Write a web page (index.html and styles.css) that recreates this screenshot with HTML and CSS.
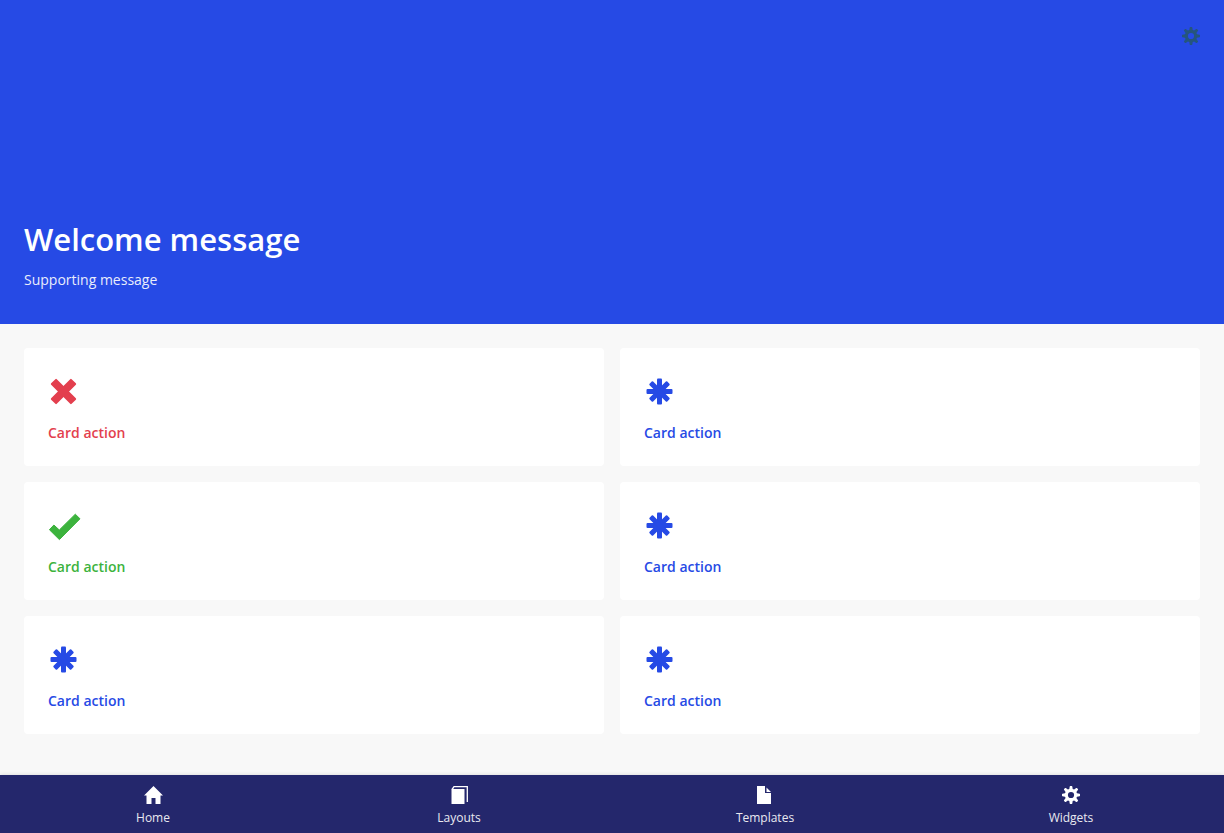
FILE: index.html
```html
<!DOCTYPE html>
<html lang="en">
<head>
<meta charset="utf-8">
<meta name="viewport" content="width=device-width, initial-scale=1">
<title>Home</title>
<link rel="stylesheet" href="styles.css">
</head>
<body>
<svg class="sprite" aria-hidden="true">
  <symbol id="asterisk" viewBox="0 0 32 32">
    <g fill="currentColor">
      <rect x="13" y="2.5" width="5" height="26" rx="1"/>
      <rect x="13" y="3" width="5" height="25" rx="1" transform="rotate(45 15.5 15.5)"/>
      <rect x="13" y="2.5" width="5" height="26" rx="1" transform="rotate(90 15.5 15.5)"/>
      <rect x="13" y="3" width="5" height="25" rx="1" transform="rotate(135 15.5 15.5)"/>
    </g>
  </symbol>
  <symbol id="cross" viewBox="0 0 32 32">
    <g fill="currentColor">
      <rect x="11.5" y="1" width="8" height="29" rx="1" transform="rotate(45 15.5 15.5)"/>
      <rect x="11.5" y="1" width="8" height="29" rx="1" transform="rotate(-45 15.5 15.5)"/>
    </g>
  </symbol>
  <symbol id="check" viewBox="0 0 33 32">
    <path d="M27.300 4.200 32 8.800 11.400 29.600 1.400 19.700 5.900 15 11.300 20z" fill="currentColor" stroke="currentColor" stroke-linejoin="round"/>
  </symbol>
  <symbol id="gear" viewBox="0 0 18 18">
    <path d="M7.300 3 7.700.4Q7.800 0 8.200 0H9.800Q10.200 0 10.300.4L10.700 3 12.100 3.600 14.200 2Q14.600 1.800 14.900 2.100L15.900 3.100Q16.200 3.400 16 3.800L14.400 5.900 15 7.300 17.600 7.700Q18 7.800 18 8.200V9.800Q18 10.200 17.600 10.300L15 10.700 14.400 12.100 16 14.200Q16.200 14.600 15.900 14.900L14.900 15.900Q14.600 16.200 14.200 16L12.100 14.400 10.700 15 10.300 17.600Q10.200 18 9.800 18H8.200Q7.800 18 7.700 17.600L7.300 15 5.900 14.400 3.800 16Q3.400 16.200 3.100 15.900L2.100 14.900Q1.800 14.600 2 14.200L3.600 12.100 3 10.700.4 10.300Q0 10.200 0 9.800V8.200Q0 7.800.4 7.700L3 7.300 3.600 5.900 2 3.800Q1.800 3.400 2.100 3.100L3.100 2.100Q3.400 1.800 3.800 2L5.900 3.600zM9 5.900A3.100 3.100 0 1 0 9 12.100 3.100 3.100 0 1 0 9 5.900z" fill="currentColor" fill-rule="evenodd"/>
  </symbol>
</svg>

<header class="hero">
  <button class="settings" type="button" aria-label="Settings"><svg class="icon-small"><use href="#gear"/></svg></button>
  <div class="welcome">
    <h1 class="title">Welcome message</h1>
    <p class="subtitle">Supporting message</p>
  </div>
</header>

<main class="cards">
  <button class="card danger" type="button"><svg class="icon"><use href="#cross"/></svg><span>Card action</span></button>
  <button class="card" type="button"><svg class="icon"><use href="#asterisk"/></svg><span>Card action</span></button>
  <button class="card success" type="button"><svg class="icon icon-check"><use href="#check"/></svg><span>Card action</span></button>
  <button class="card" type="button"><svg class="icon"><use href="#asterisk"/></svg><span>Card action</span></button>
  <button class="card" type="button"><svg class="icon"><use href="#asterisk"/></svg><span>Card action</span></button>
  <button class="card" type="button"><svg class="icon"><use href="#asterisk"/></svg><span>Card action</span></button>
</main>

<nav class="tabs" aria-label="Main">
  <a class="tab" href="#home"><svg class="tab-icon" viewBox="0 0 20 20"><path d="M10.500 1 20 10.500H17.500V19H12.500V13H8.500V19H3.500V10.500H1z" fill="currentColor"/></svg><span class="tab-label">Home</span></a>
  <a class="tab" href="#layouts"><svg class="tab-icon" viewBox="0 0 20 20"><path d="M2.500 4H15.500V19H2.500z" fill="currentColor"/><path d="M3 4.500 5 1.700H18.300V17" fill="none" stroke="currentColor" stroke-width="1.300"/></svg><span class="tab-label">Layouts</span></a>
  <a class="tab" href="#templates"><svg class="tab-icon" viewBox="0 0 20 20"><path d="M2 1H10V8H16V19H2zM11.500 2.500 16 7H11.500z" fill="currentColor"/></svg><span class="tab-label">Templates</span></a>
  <a class="tab" href="#widgets"><svg class="tab-icon" viewBox="-1 -1 20 20"><use href="#gear" width="18" height="18"/></svg><span class="tab-label">Widgets</span></a>
</nav>
</body>
</html>
```
FILE: styles.css
```css
* {
  box-sizing: border-box;
}

body {
  margin: 0;
  min-height: 100vh;
  display: flex;
  flex-direction: column;
  background: #f8f8f8;
  font-family: "Open Sans", sans-serif;
  font-size: 14px;
  line-height: 20px;
}

button {
  border: 0;
  font: inherit;
  text-align: left;
  cursor: pointer;
}

svg {
  display: block;
}

.sprite {
  position: absolute;
  width: 0;
  height: 0;
}

.hero {
  min-height: 324px;
  padding: 24px 24px 34px;
  display: flex;
  flex-direction: column;
  justify-content: space-between;
  background: #264ae5;
  color: #fff;
}

.settings {
  align-self: flex-end;
  padding: 3px 0;
  background: transparent;
  color: #25557d;
}

.icon-small {
  width: 18px;
  height: 18px;
}

.title {
  margin: 0 0 10px;
  font-size: 31px;
  font-weight: 600;
  line-height: 42px;
}

.subtitle {
  margin: 0;
  opacity: 0.9;
}

.cards {
  flex: 1;
  display: grid;
  grid-template-columns: 1fr 1fr;
  align-content: start;
  gap: 16px;
  padding: 24px;
}

.card {
  display: flex;
  flex-direction: column;
  align-items: flex-start;
  gap: 15px;
  padding: 28px 24px 23px;
  border-radius: 4px;
  background: #fff;
  color: #264ae5;
  font-weight: 600;
}

.danger {
  color: #e33f4e;
}

.success {
  color: #3cb33d;
}

.icon {
  width: 32px;
  height: 32px;
}

.icon-check {
  width: 33px;
}

.tabs {
  position: sticky;
  bottom: 0;
  display: flex;
  background: #24276c;
  box-shadow: 0 0 4px rgba(0, 0, 0, 0.14);
}

.tab {
  flex: 1;
  display: flex;
  flex-direction: column;
  align-items: center;
  gap: 5px;
  padding: 10px 0 7px;
  color: #fff;
  font-size: 12px;
  line-height: 16px;
  text-decoration: none;
}

.tab-icon {
  width: 20px;
  height: 20px;
}

.tab-label {
  opacity: 0.9;
}
```
